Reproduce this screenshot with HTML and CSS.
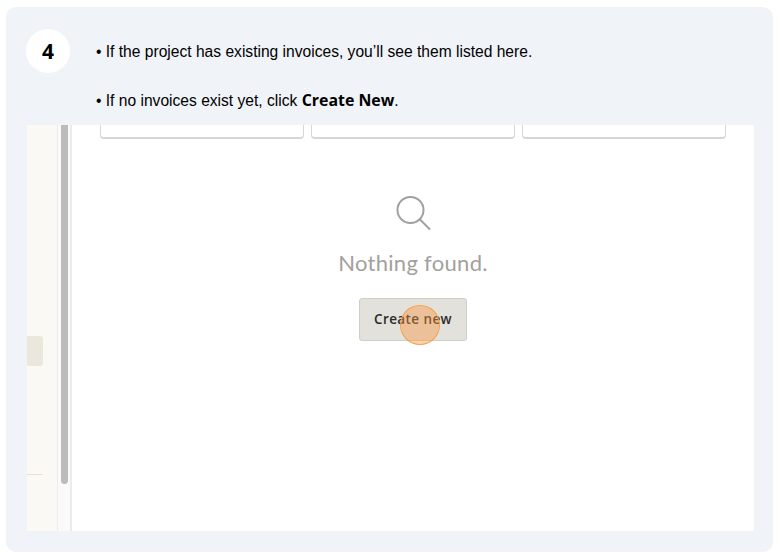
FILE: index.html
```html
<!DOCTYPE html>
<html lang="en">
<head>
<meta charset="utf-8">
<title>Step 4</title>
<link rel="stylesheet" href="styles.css">
</head>
<body>
<main class="card">
  <header class="step">
    <div class="badge">4</div>
    <div class="copy">
      <p>• If the project has existing invoices, you’ll see them listed here.</p>
      <p>• If no invoices exist yet, click <strong>Create New</strong>.</p>
    </div>
  </header>
  <section class="shot">
    <aside class="sidebar">
      <div class="chip"></div>
      <div class="rule"></div>
    </aside>
    <div class="track"><div class="thumb"></div></div>
    <div class="content">
      <div class="tiles">
        <div class="tile"></div>
        <div class="tile"></div>
        <div class="tile"></div>
      </div>
      <div class="empty">
        <svg class="search" width="36" height="36" viewBox="0 0 36 36" fill="none" stroke="#a3a09e" stroke-width="2">
          <circle cx="15.500" cy="14" r="13"/>
          <path d="M25 23.500l9.500 9.500" stroke-linecap="round"/>
        </svg>
        <div class="title">Nothing found.</div>
        <div class="action">
          <button class="button">Create new</button>
          <span class="spot"></span>
        </div>
      </div>
    </div>
  </section>
</main>
</body>
</html>
```
FILE: styles.css
```css
* { box-sizing: border-box; }
html, body { margin: 0; height: 100%; background: #fff; }
body { padding: 7px 9px 5px 6px; overflow: hidden; }
.card {
  height: 545px;
  background: #f0f3f8;
  border-radius: 10px;
  padding: 22px 19px 21px 20px;
  display: flex;
  flex-direction: column;
}
.step { display: flex; height: 96px; }
.badge {
  width: 44px; height: 44px;
  border-radius: 50%;
  background: #fff;
  color: #000;
  font: 700 21px/44px "Open Sans", sans-serif;
  text-align: center;
  flex: none;
}
.copy { margin-left: 26px; padding-top: 14px; }
.copy p {
  margin: 0 0 30px;
  font: 15.6px/18px "Liberation Sans", Arial, sans-serif;
  color: #000;
}
.copy strong { font-family: "Open Sans", sans-serif; font-weight: 700; font-size: 15.9px; }
.shot { flex: 1; display: flex; overflow: hidden; background: #fff; min-height: 0; margin-left: 1px; }
.sidebar { width: 30px; background: #fbf9f4; flex: none; padding-top: 211px; }
.chip { width: 16px; height: 30px; background: #ebe7dc; border-radius: 0 3px 3px 0; }
.rule { width: 16px; height: 1px; background: #e8e2d2; margin-top: 108px; }
.track {
  width: 15px; flex: none;
  background: #fafafa;
  border-left: 1px solid #eeecea;
  border-right: 2px solid #ecebe7;
  padding-left: 3px;
}
.thumb { width: 7px; height: 359px; background: #bcbcbc; border-radius: 0 0 4px 4px; }
.content { flex: 1; display: flex; flex-direction: column; padding-left: 28px; }
.tiles { display: flex; gap: 7px; width: 626px; margin-top: -20px; }
.tile {
  flex: 1; height: 34px;
  background: #fff;
  border: 1px solid #d6d6d6;
  border-bottom-width: 2px;
  border-radius: 4px;
}
.empty {
  width: 626px;
  display: flex; flex-direction: column; align-items: center;
  padding-top: 57px;
}
.search { display: block; }
.title {
  margin-top: 17px;
  font: 400 22px/28px Lato, sans-serif;
  color: #a3a09e;
  letter-spacing: 0.3px;
}
.action { position: relative; margin-top: 21px; }
.button {
  display: block;
  width: 108px; height: 43px;
  background: #e2e1dc;
  border: 1px solid #cfcec9;
  border-radius: 3px;
  font: 600 13.500px/1 "Open Sans", sans-serif;
  letter-spacing: 0.4px;
  color: #2a2a2a;
  padding: 0;
}
.spot {
  position: absolute;
  left: 41px; top: 7px;
  width: 40px; height: 40px;
  border-radius: 50%;
  background: rgba(250, 150, 60, 0.42);
  border: 1.500px solid rgba(248, 155, 60, 0.85);
}
```
